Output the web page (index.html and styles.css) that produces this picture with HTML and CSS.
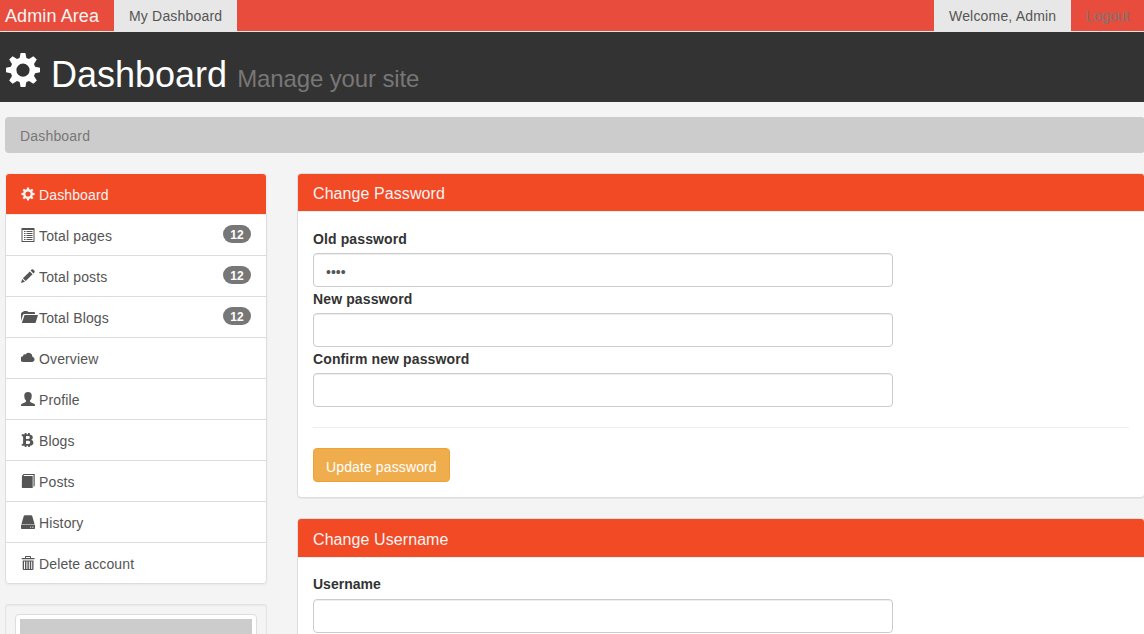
FILE: index.html
```
<!DOCTYPE html>
<html lang="en">
<head>
<meta charset="utf-8">
<title>Admin Area | Dashboard</title>
<link rel="stylesheet" href="styles.css">
</head>
<body>
<svg class="sprite" aria-hidden="true">
  <symbol id="cog" viewBox="0 0 36 36"><path fill-rule="evenodd" d="M15.6 1h4.8l1 4.9 2.6 1.1 4.4-2.8 3.4 3.4-2.8 4.4 1.1 2.7 4.9 1v4.6l-4.9 1-1.1 2.7 2.8 4.4-3.4 3.4-4.4-2.8-2.6 1.1-1 4.9h-4.8l-1-4.9-2.6-1.1-4.4 2.8-3.4-3.4L7 24 5.9 21.300 1 20.300v-4.600l4.900-1L7 12 4.200 7.600l3.400-3.400L12 7l2.600-1.100zM18 11.500a6.600 6.600 0 1 0 0 13.200 6.600 6.600 0 0 0 0-13.200z"/></symbol>
  <symbol id="list" viewBox="0 0 14 14"><path fill-rule="evenodd" d="M.5 0h13v14H.5zM1.500 2v11h11V2z"/><path d="M3 3h1.500v1H3zM5.500 3h6v1h-6zM3 5h1.500v1H3zM5.500 5h6v1h-6zM3 7h1.500v1H3zM5.500 7h6v1h-6zM3 9h1.500v1H3zM5.500 9h6v1h-6zM3 11h1.500v1H3zM5.500 11h6v1h-6z"/></symbol>
  <symbol id="pencil" viewBox="0 0 14 14"><path d="M0 14l1.200-4L4 12.800zM1.900 9.300l6.900-6.900 2.800 2.800-6.900 6.900zM9.600 1.600l1-1q.8-.8 1.600 0l1.200 1.200q.8.800 0 1.600l-1 1z"/></symbol>
  <symbol id="folder" viewBox="0 0 17 14"><path d="M0 11V3.500L1.200 2H2l.8-1h3.500l.8 1h6q.9 0 .9 1v1H3.300q-1 0-1.400 1zM3.600 5H17l-2.300 7.500q-.2.500-.8.500H.8z"/></symbol>
  <symbol id="cloud" viewBox="0 0 14 14"><path d="M2.900 11A2.900 2.900 0 0 1 2 5.200a1.900 1.900 0 0 1 2.400-1.700 3.800 3.800 0 0 1 7 2.200A2.700 2.700 0 0 1 11.400 11z"/></symbol>
  <symbol id="user" viewBox="0 0 14 14"><path d="M0 14v-1.300q.2-.7 1-1l3.300-1.500q.7-.3.700-1V8.500Q3.300 7 3.300 4.500V3Q3.600 0 7 0t3.700 3v1.500Q10.700 7 9 8.500v.7q0 .7.700 1l3.300 1.500q.8.300 1 1V14z"/></symbol>
  <symbol id="bitcoin" viewBox="0 0 14 14"><path fill-rule="evenodd" d="M.7 1.300h3V0h1.800v1.300H7V0h1.800v1.400q3 .5 3 3 0 1.800-1.600 2.400 2.200.6 2.200 2.900 0 2.700-3.500 3.100V14H7.100v-1.200H5.500V14H3.700v-1.200h-3v-1.600q1.400 0 1.400-1V3.900q0-1-1.400-1zM5 3v2.900h2.300q1.500-.1 1.500-1.500T7.300 3zM5 7.700V11h2.600q1.600-.1 1.600-1.700T7.600 7.700z"/></symbol>
  <symbol id="book" viewBox="0 0 14 14"><path d="M1 1.800L2.500 0H13.700v11.800L12.500 13V1.100H3.200L2.400 2H11.700V14H1.600Q.8 14 .8 13z"/></symbol>
  <symbol id="drive" viewBox="0 0 14 14"><path fill-rule="evenodd" d="M2.700 1.300Q3 .2 4 .2h6q1 0 1.300 1.100L13.700 9.400H.3zM0 10h14v3.300q0 .7-.7.700H.7Q0 14 0 13.300zm9 1.800v.8h1.200v-.8zm2 0v.8h1.500v-.8z"/></symbol>
  <symbol id="trash" viewBox="0 0 14 14"><path fill-rule="evenodd" d="M4 2V.7Q4 0 4.700 0h4.600Q10 0 10 .7V2h3.500v1.200H.7V2zM5 2h4V1H5zM1.700 4.500h10.800V13q0 1-1 1H2.700q-1 0-1-1zM3 5.500V13h1V5.500zm2.400 0V13h1V5.500zm2.400 0V13h1V5.500zm2.400 0V13h1V5.500z"/></symbol>
</svg>

<nav class="navbar">
  <a class="brand">Admin Area</a>
  <a class="nav-link active">My Dashboard</a>
  <div class="nav-right">
    <a class="nav-link active">Welcome, Admin</a>
    <a class="nav-link">Logout</a>
  </div>
</nav>

<header class="header">
  <h1><svg class="cog-large"><use href="#cog"/></svg><span>Dashboard</span><small>Manage your site</small></h1>
</header>

<div class="container">
  <ol class="breadcrumb"><li>Dashboard</li></ol>
  <div class="row">
    <aside class="sidebar">
      <div class="list-group">
        <a class="item active"><svg class="icon"><use href="#cog"/></svg>Dashboard</a>
        <a class="item"><svg class="icon"><use href="#list"/></svg>Total pages<span class="badge">12</span></a>
        <a class="item"><svg class="icon"><use href="#pencil"/></svg>Total posts<span class="badge">12</span></a>
        <a class="item"><svg class="icon icon-wide"><use href="#folder"/></svg>Total Blogs<span class="badge">12</span></a>
        <a class="item"><svg class="icon"><use href="#cloud"/></svg>Overview</a>
        <a class="item"><svg class="icon"><use href="#user"/></svg>Profile</a>
        <a class="item"><svg class="icon"><use href="#bitcoin"/></svg>Blogs</a>
        <a class="item"><svg class="icon"><use href="#book"/></svg>Posts</a>
        <a class="item"><svg class="icon"><use href="#drive"/></svg>History</a>
        <a class="item"><svg class="icon"><use href="#trash"/></svg>Delete account</a>
      </div>
      <div class="well"><div class="thumbnail"><div class="thumb-fill"></div></div></div>
    </aside>
    <main class="content">
      <section class="panel">
        <h3 class="panel-heading">Change Password</h3>
        <form class="panel-body">
          <label for="old">Old password</label>
          <input id="old" type="password" value="1234">
          <label for="new">New password</label>
          <input id="new" type="password">
          <label for="confirm">Confirm new password</label>
          <input id="confirm" type="password">
          <hr>
          <button type="button">Update password</button>
        </form>
      </section>
      <section class="panel panel-last">
        <h3 class="panel-heading tall">Change Username</h3>
        <form class="panel-body">
          <label class="raised" for="username">Username</label>
          <input id="username" type="text">
        </form>
      </section>
    </main>
  </div>
</div>
</body>
</html>
```
FILE: styles.css
```
* { box-sizing: border-box; }
html, body { height: 100%; }
body {
  margin: 0;
  overflow: hidden;
  background: #f4f4f4;
  color: #333;
  font: 14px/20px "Liberation Sans", Arial, sans-serif;
  letter-spacing: .18px;
}
.sprite { display: none; }
svg { fill: currentColor; }

.navbar {
  display: flex;
  height: 32px;
  background: #e74c3c;
  border-bottom: 1px solid #e7e7e7;
}
.brand { width: 114px; padding: 6px 0 0 5px; font-size: 18px; letter-spacing: .1px; color: #f4f4f4; white-space: nowrap; }
.nav-link { flex: none; height: 31px; padding: 6px 15px 0; color: #777; }
.nav-link.active { height: 32px; background: #e7e7e7; color: #555; }
.navbar > .nav-link { width: 123px; padding-right: 0; white-space: nowrap; }
.nav-right { display: flex; width: 210px; margin-left: auto; white-space: nowrap; }
.nav-right .active { width: 137px; padding-right: 0; }

.header { height: 70px; padding: 20px 0 0 5px; background: #333; color: #fff; }
.header h1 { display: flex; align-items: baseline; margin: 0; font-size: 36px; line-height: 46px; font-weight: 400; letter-spacing: 0; }
.header small { margin-left: 10px; font-size: 24px; letter-spacing: -.12px; color: #777; }
.cog-large { width: 36px; height: 36px; margin-right: 10px; align-self: flex-start; }

.container { width: 1140px; height: 517px; margin: 15px 0 0 5px; overflow: hidden; }
.breadcrumb { height: 36px; margin: 0 0 20px; padding: 9px 15px; border-radius: 4px; background: #ccc; color: #777; list-style: none; }
.row { display: flex; gap: 30px; }
.sidebar { width: 262px; flex: none; letter-spacing: .13px; }
.content { flex: 1; }

.list-group { margin-bottom: 20px; border-radius: 4px; box-shadow: 0 1px 2px rgba(0,0,0,.05); }
.item { display: flex; height: 42px; margin-bottom: -1px; padding: 11px 15px 9px; border: 1px solid #ddd; background: #fff; color: #555; }
.item:first-child { border-radius: 4px 4px 0 0; }
.item:last-child { margin-bottom: 0; border-radius: 0 0 4px 4px; }
.item.active { position: relative; border-color: #eee; background: #f24a25; color: #f4f4f4; }
.icon { width: 14px; height: 14px; margin: 2px 4px 0 0; }
.icon-wide { width: 17px; margin-right: 1px; }
.badge { width: 28px; height: 18px; margin: -1px 0 0 auto; padding: 4px 0 2px; border-radius: 10px; background: #777; color: #fff; font-size: 12px; line-height: 12px; font-weight: 700; text-align: center; }

.well { height: 120px; padding: 9px; border: 1px solid #e3e3e3; border-radius: 3px; background: #f4f4f4; box-shadow: inset 0 1px 1px rgba(0,0,0,.05); }
.thumbnail { padding: 4px; border: 1px solid #ddd; border-radius: 4px; background: #fff; }
.thumb-fill { height: 80px; background: #ccc; }

.panel { margin-bottom: 20px; border: 1px solid #ddd; border-radius: 4px; background: #fff; box-shadow: 0 1px 1px rgba(0,0,0,.05); }
.panel-last { margin-bottom: 0; }
.panel-heading { height: 38px; margin: 0; padding: 11px 15px 8px; border-bottom: 1px solid #eee; border-radius: 3px 3px 0 0; background: #f24a25; color: #f4f4f4; font-size: 16px; line-height: 18px; font-weight: 400; letter-spacing: .08px; }
.panel-heading.tall { height: 39px; padding-top: 12px; }
.panel-body { display: block; padding: 15px; }
label { display: block; height: 26px; padding-top: 2px; font-weight: 700; letter-spacing: .12px; }
label.raised { padding-top: 1px; letter-spacing: 0; }
input { display: block; width: 580px; height: 34px; padding: 8px 12px 4px; border: 1px solid #ccc; border-radius: 4px; background: #fff; color: #555; font: inherit; box-shadow: inset 0 1px 1px rgba(0,0,0,.075); }
hr { margin: 20px 0; border: 0; border-top: 1px solid #eee; }
button { display: block; width: 137px; height: 34px; padding: 8px 12px 4px; border: 1px solid #eea236; border-radius: 4px; background: #f0ad4e; color: #fff; font: inherit; letter-spacing: .12px; text-align: left; white-space: nowrap; }
```
